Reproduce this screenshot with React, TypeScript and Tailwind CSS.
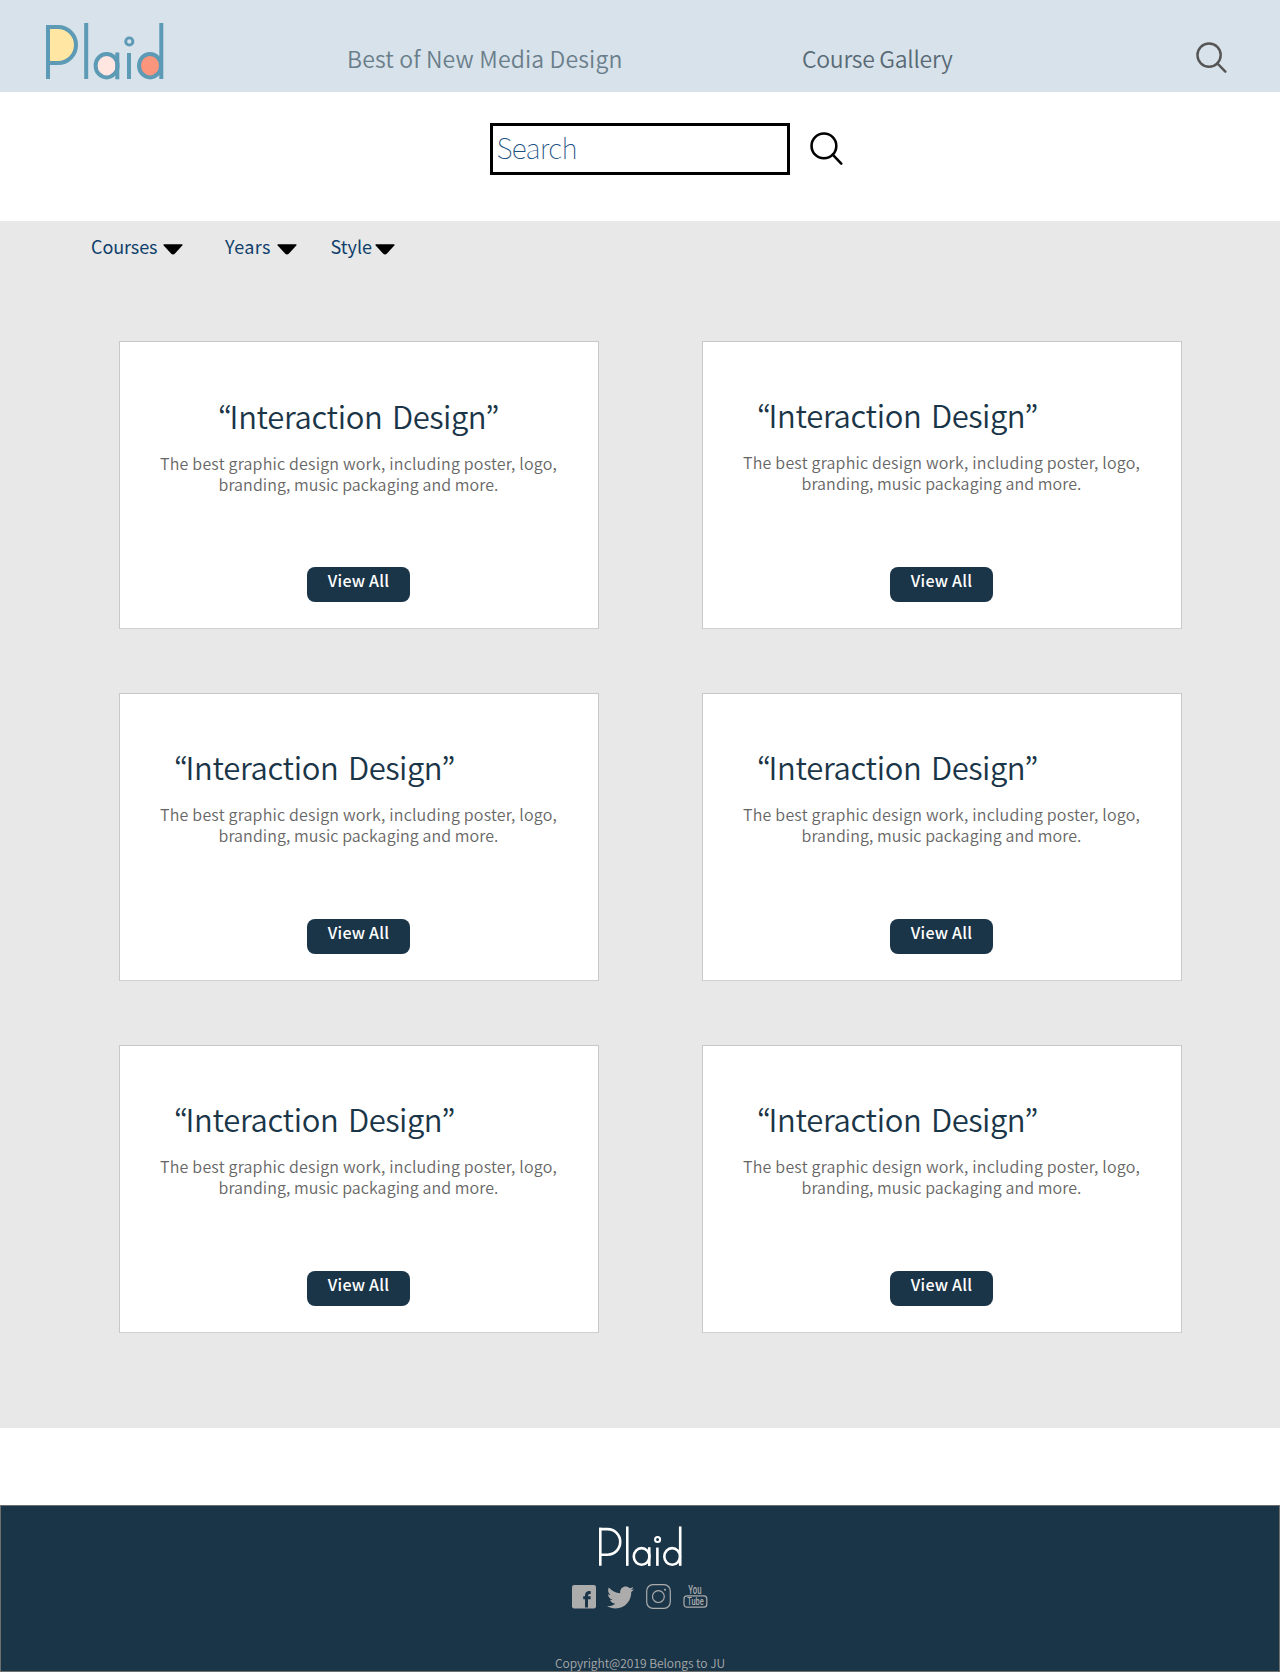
import { FaTwitter } from "react-icons/fa";

const FONT = "font-['Noto_Sans_CJK_KR','Noto_Sans',sans-serif]";

/* The Plaid wordmark, built from geometric strokes and optional colour fills. */
function PlaidLogo({ className, weight, fills = ["none", "none", "none"] }: { className: string; weight: number; fills?: string[] }) {
  const h = weight / 2;
  return (
    <svg className={className} viewBox="0 0 118 57" fill="none" stroke="currentColor" strokeWidth={weight} role="img" aria-label="Plaid">
      <svg x="0" y="0" width="40" height="57" viewBox="0 0 40 57">
        <rect x="-20" y={2 + h} width={52 - h} height={40 - weight} rx="18" fill={fills[0]} />
        <line x1={h} y1="2" x2={h} y2="56" />
      </svg>
      <line x1="40.2" y1="0" x2="40.2" y2="56" />
      <ellipse cx="60.6" cy="42.7" rx={13 - h} ry={13.7 - h} fill={fills[1]} />
      <line x1={73.3 - h} y1="29.5" x2={73.3 - h} y2="56.3" />
      <line x1="83" y1="30" x2="83" y2="56" />
      <circle cx="83.3" cy="18.5" r="3.6" strokeWidth="2.9" />
      <ellipse cx="104" cy="42.7" rx={13 - h} ry={13.7 - h} fill={fills[2]} />
      <line x1={117.3 - h} y1="0" x2={117.3 - h} y2="56" />
    </svg>
  );
}

function Magnifier({ className }: { className: string }) {
  return (
    <svg className={className} viewBox="0 0 32 32" fill="none" stroke="currentColor" strokeWidth="2.5" strokeLinecap="round">
      <circle cx="13.5" cy="13.5" r="12" />
      <path d="M22 22 30.3 30.6" />
    </svg>
  );
}

function Caret({ className }: { className: string }) {
  return (
    <svg className={`h-[11px] w-5 ${className}`} viewBox="0 0 20 11">
      <path d="M1.2 0.2H18.8Q20.2 0.4 19.3 1.5L12 9.6Q10 11.4 8 9.6L0.7 1.5Q-0.2 0.4 1.2 0.2Z" fill="#000" />
    </svg>
  );
}

function Card({ centered }: { centered: boolean }) {
  return (
    <article className={`flex h-72 flex-col items-center border border-[#c8c8c6] border-b-[#d0d0cc] bg-white ${centered ? "pt-[54px]" : "pt-[53px]"}`}>
      <h2 className={`text-[31px] leading-10 font-[350] tracking-[-0.33px] whitespace-nowrap text-[#1a3548] [word-spacing:3px] ${centered ? "pr-px" : "self-start pl-[54px]"}`}>
        <span className="tracking-[-2.6px]">“</span>Interaction <span className="tracking-[-0.5px]">Design”</span>
      </h2>
      <p className="mt-[17px] pr-px text-center text-base leading-[21px] font-[350] whitespace-nowrap text-[#666]">
        <span className="block tracking-[0.2px]">The best graphic design work, including poster, logo,</span>
        <span className="block tracking-[0.08px]">branding, music packaging and more.</span>
      </p>
      <button className={`mr-px h-[35px] w-[103px] rounded-lg bg-[#1a3548] pb-2 text-base leading-[27px] font-medium tracking-[0.22px] text-white ${centered ? "mt-[72px]" : "mt-[73px]"}`}>
        View All
      </button>
    </article>
  );
}

export default function App() {
  return (
    <div className={`flex h-[1672px] w-[1280px] flex-col bg-white ${FONT}`}>
      <header className="flex h-[92px] bg-[#d8e2ea] font-[350]">
        <PlaidLogo className="mt-[23px] ml-[46px] h-[57px] w-[118px] text-[#5c9ab5]" weight={4} fills={["#ffe6a3", "#ffe6e0", "#fb957b"]} />
        <nav className="mt-[43px] flex text-[23px] leading-[30px] whitespace-nowrap">
          <a className="ml-[183px] w-[455px] tracking-[0.16px] text-[#6a7e8a]">Best of New Media Design</a>
          <a className="w-[394px] tracking-[-0.28px] text-[#586a76]">Course Gallery</a>
        </nav>
        <Magnifier className="mt-[42.4px] ml-[0.4px] h-[31px] w-[31px] text-[#555]" />
      </header>

      <section className="flex h-[129px] pt-[31px] pl-[490px]">
        <div className="h-[52px] w-[300px] border-3 border-black pl-[3.5px] text-[28px] leading-[42px] font-thin tracking-[-0.65px] text-[#1d5285]">Search</div>
        <Magnifier className="mt-[9.3px] ml-5 h-[33px] w-[33px] text-black" />
      </section>

      <main className="h-[1207px] bg-[#e8e8e8]">
        <div className="flex h-[120px] pt-[13px] pl-[91px] text-lg leading-6 whitespace-nowrap text-[#0f3f6b]">
          <span className="w-[71.5px] tracking-[-0.1px]">Courses</span>
          <Caret className="mt-[9.5px]" />
          <span className="ml-[42.5px] w-[52px] tracking-[0.4px]">Years</span>
          <Caret className="mt-[9.5px]" />
          <span className="ml-[33.5px] w-[45px]">Style</span>
          <Caret className="mt-[9.5px] -ml-[1px]" />
        </div>
        <div className="ml-[119px] grid w-[1063px] grid-cols-[480px_480px] justify-between gap-y-16">
          {[0, 1, 2, 3, 4, 5].map((i) => (
            <Card key={i} centered={i === 0} />
          ))}
        </div>
      </main>

      <footer className="mt-[77px] flex h-[167px] flex-col items-center border border-[#6d706e] bg-[#1a3548]">
        <PlaidLogo className="mt-[20px] ml-px h-[41px] w-[83px] text-white" weight={3.7} />
        <div className="mt-[17px] flex h-[26px] items-start pr-px text-[#acacac]">
          <svg className="mt-px h-6 w-6" viewBox="0 0 24 24">
            <rect width="24" height="23.5" rx="2.2" fill="currentColor" />
            <path d="M14.5 22.5V10.5Q14.5 7.4 17.5 7.4H18.7M11.2 12.7H18.6" fill="none" stroke="#1a3548" strokeWidth="3" />
          </svg>
          <FaTwitter className="ml-[11px] h-[27px] w-[27px]" />
          <svg className="ml-[12px] h-[25px] w-[25px]" viewBox="0 0 25 25" fill="none" stroke="currentColor" strokeWidth="1.2">
            <rect x="0.7" y="0.7" width="23.6" height="23.6" rx="6.2" />
            <circle cx="12.4" cy="12.6" r="5.9" />
            <circle cx="19" cy="5.8" r="1" fill="currentColor" stroke="none" />
          </svg>
          <svg className="ml-[12px] h-[25px] w-[25px] overflow-visible font-['Roboto',sans-serif] font-medium" viewBox="0 0 25 25" fill="currentColor">
            <text x="5.3" y="10.2" fontSize="12" textLength="13.2" lengthAdjust="spacingAndGlyphs">You</text>
            <rect x="1" y="11.8" width="22.8" height="11.4" rx="3" fill="none" stroke="currentColor" strokeWidth="1.2" />
            <text x="4.3" y="21.3" fontSize="10.5" textLength="16.4" lengthAdjust="spacingAndGlyphs">Tube</text>
          </svg>
        </div>
        <p className="mt-[45px] text-xs leading-4 font-[350] tracking-[-0.03px] whitespace-nowrap text-[#a9abac]">Copyright@2019 Belongs to JU</p>
      </footer>
    </div>
  );
}
